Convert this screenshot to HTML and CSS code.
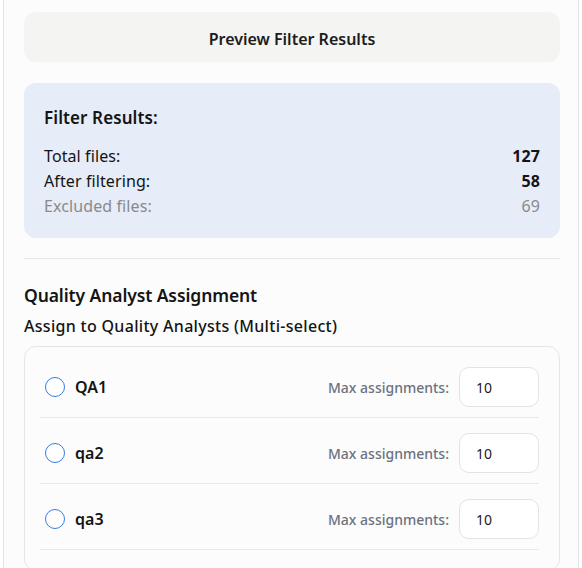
FILE: index.html
```html
<!DOCTYPE html>
<html>
<head>
<meta charset="utf-8">
<link rel="stylesheet" href="styles.css">
</head>
<body>
<div class="panel">
  <button class="preview-btn">Preview Filter Results</button>

  <div class="results">
    <h3 class="results-title">Filter Results:</h3>
    <div class="results-row"><span>Total files:</span><span class="num">127</span></div>
    <div class="results-row"><span>After filtering:</span><span class="num">58</span></div>
    <div class="results-row muted"><span>Excluded files:</span><span>69</span></div>
  </div>

  <hr class="divider">

  <h2 class="section-title">Quality Analyst Assignment</h2>
  <div class="section-label">Assign to Quality Analysts (Multi-select)</div>

  <div class="qa-list">
    <div class="qa-row">
      <span class="radio"></span>
      <span class="qa-name">QA1</span>
      <span class="max-label">Max assignments:</span>
      <span class="max-input">10</span>
    </div>
    <div class="qa-row">
      <span class="radio"></span>
      <span class="qa-name">qa2</span>
      <span class="max-label">Max assignments:</span>
      <span class="max-input">10</span>
    </div>
    <div class="qa-row">
      <span class="radio"></span>
      <span class="qa-name">qa3</span>
      <span class="max-label">Max assignments:</span>
      <span class="max-input">10</span>
    </div>
  </div>
</div>
</body>
</html>
```

FILE: styles.css
```css
* { box-sizing: border-box; }
html, body { margin: 0; padding: 0; background: #ffffff; }
body {
  font-family: "Noto Sans", "Open Sans", sans-serif;
  color: #141414;
  height: 568px;
  overflow: hidden;
}
.panel {
  margin-left: 3px;
  width: 576px;
  height: 568px;
  overflow: hidden;
  background: #fcfcfc;
  border-left: 1px solid #e3e3e3;
  border-right: 1px solid #e3e3e3;
  padding: 12px 18px 0 20px;
}
.preview-btn {
  display: block;
  width: 100%;
  height: 50px;
  border: none;
  border-radius: 12px;
  background: #f4f4f2;
  font-family: inherit;
  font-size: 16px;
  font-weight: 600;
  color: #1c1c1c;
  padding: 3px 0 0;
}
.results {
  margin-top: 21px;
  background: #e6ecf8;
  border-radius: 12px;
  padding: 23px 20px 19px;
}
.results-title {
  margin: 0 0 14px;
  font-size: 17px;
  font-weight: 600;
  line-height: 24px;
  letter-spacing: 0.1px;
}
.results-row {
  display: flex;
  justify-content: space-between;
  font-size: 16px;
  line-height: 25px;
  letter-spacing: 0.1px;
}
.results-row .num { font-weight: 700; }
.results-row.muted { color: #8a8a8a; }
.divider {
  border: none;
  border-top: 1px solid #e6e6e6;
  margin: 20px 0 0;
}
.section-title {
  margin: 24px 0 0;
  font-size: 17.5px;
  font-weight: 600;
  line-height: 24px;
  letter-spacing: -0.1px;
}
.section-label {
  margin-top: 9px;
  font-size: 16px;
  font-weight: 500;
  line-height: 20px;
  letter-spacing: 0.3px;
}
.qa-list {
  margin-top: 10px;
  border: 1px solid #e5e5e5;
  border-radius: 12px;
  padding: 10px 20px 20px 15px;
}
.qa-row {
  display: flex;
  align-items: center;
  padding: 10px 0 10px 5px;
  border-bottom: 1px solid #e8e8e8;
}
.qa-row + .qa-row { margin-top: 5px; }
.radio {
  width: 20px;
  height: 20px;
  border-radius: 50%;
  border: 1.5px solid #3b7ae6;
  background: #ffffff;
  flex: none;
}
.qa-name {
  margin-left: 10px;
  font-size: 16px;
  font-weight: 600;
  flex: 1;
}
.max-label {
  font-size: 14px;
  font-weight: 500;
  color: #6b7280;
  margin-right: 10px;
}
.max-input {
  width: 80px;
  height: 40px;
  border: 1px solid #e3e3e3;
  border-radius: 10px;
  background: #ffffff;
  display: flex;
  align-items: center;
  padding-left: 16px;
  font-size: 14px;
  color: #1a1a1a;
}
```
